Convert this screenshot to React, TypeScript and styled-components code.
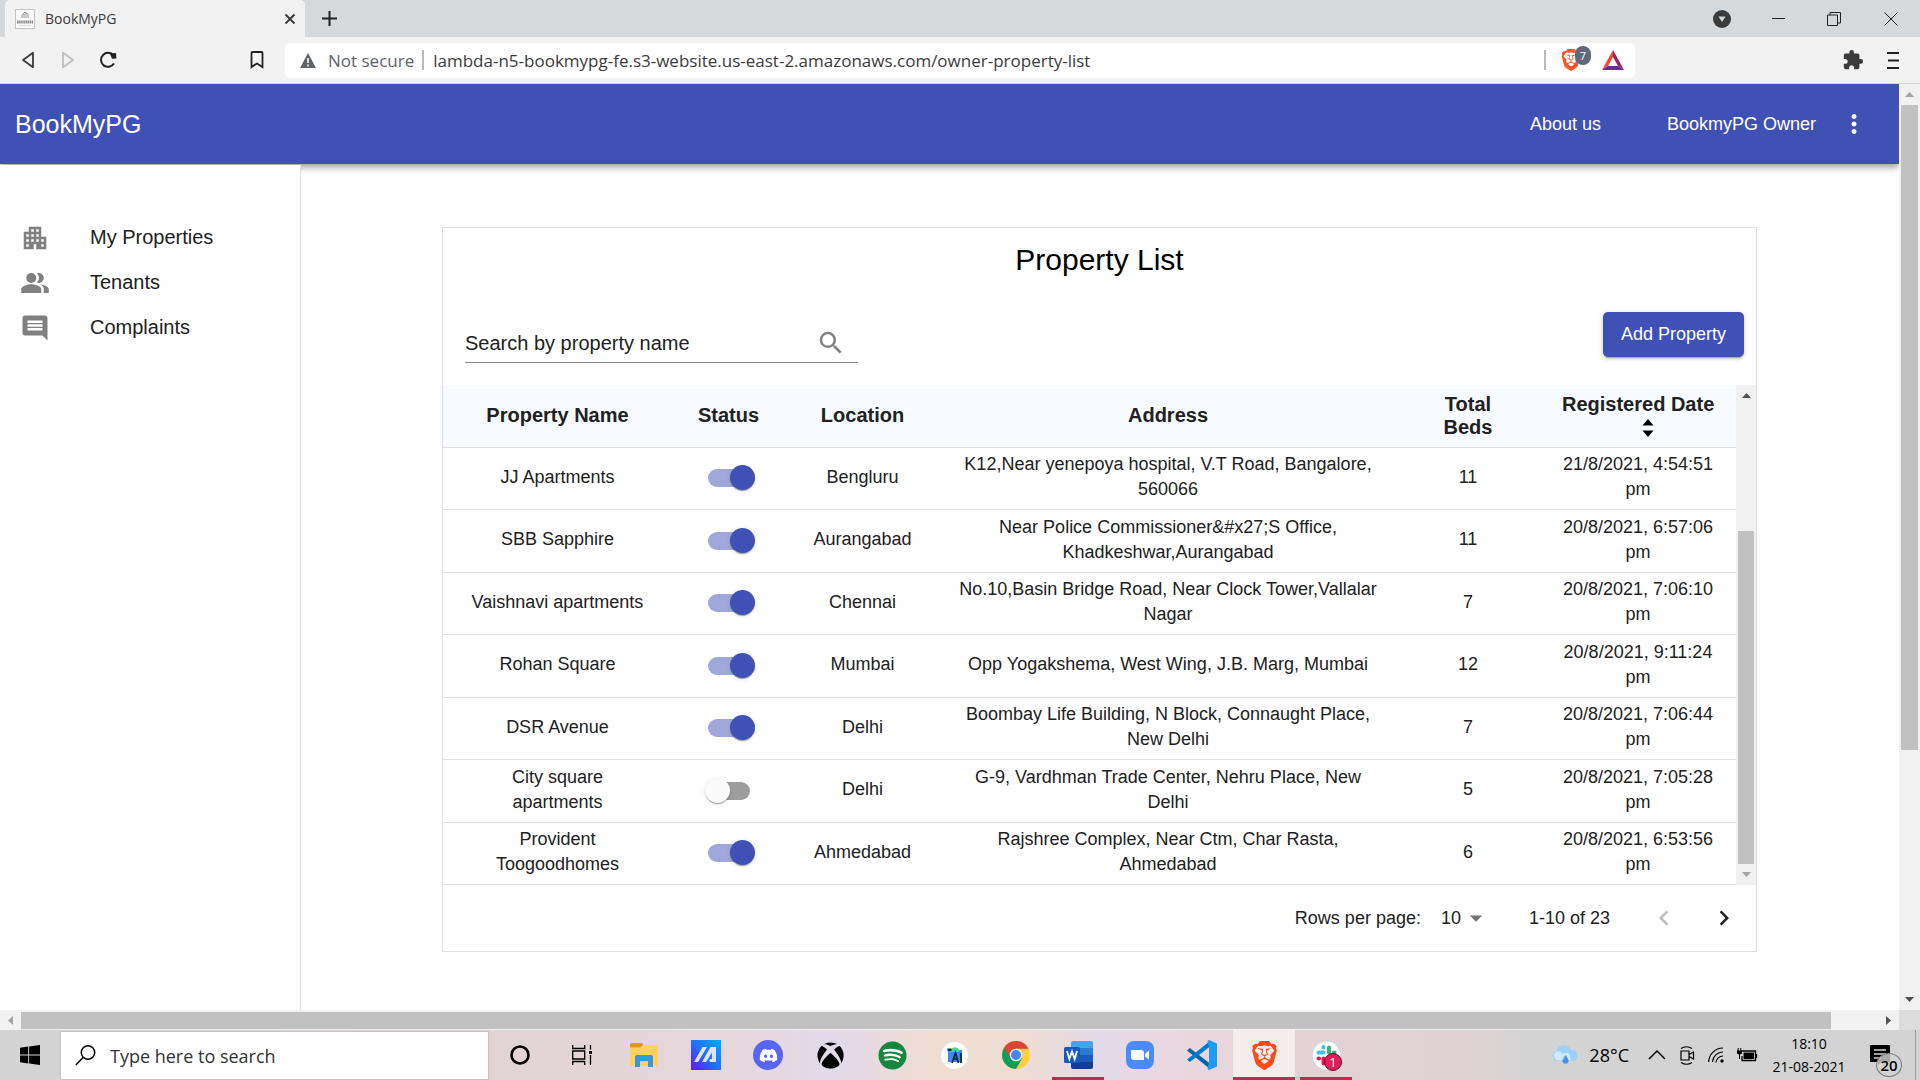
import React, { useState } from 'react';
import styled, { createGlobalStyle, css } from 'styled-components';
import {
  MdApartment,
  MdPeopleAlt,
  MdComment,
  MdSearch,
  MdMoreVert,
  MdChevronLeft,
  MdChevronRight,
  MdArrowDropDown,
  MdExtension,
} from 'react-icons/md';
import { FaDiscord, FaSpotify, FaXbox } from 'react-icons/fa';
import { SiBrave } from 'react-icons/si';

const primary = '#3f51b5';
const line = '#e0e0e0';
const appFont = '"Liberation Sans", Arial, sans-serif';
const systemFont = '"Open Sans", "Noto Sans", sans-serif';

const GlobalStyle = createGlobalStyle`
  *, *::before, *::after { box-sizing: border-box; }
  body { margin: 0; overflow: hidden; background: #fff; font-family: ${appFont}; color: #212121; }
  button, input, select { font: inherit; color: inherit; }
  button { border: 0; padding: 0; background: none; cursor: pointer; }
  svg { display: block; flex: none; }
  a { color: inherit; text-decoration: none; }
`;

const Desktop = styled.div`
  display: flex;
  flex-direction: column;
  height: 100vh;
`;

/* ---------- browser frame ---------- */

const TabStrip = styled.div`
  display: flex;
  align-items: stretch;
  height: 37px;
  padding-left: 5px;
  background: #d5d9dc;
  font-family: ${systemFont};
`;

const Tab = styled.div`
  display: flex;
  align-items: center;
  width: 300px;
  padding: 0 5px 0 10px;
  gap: 10px;
  border-radius: 5px 5px 0 0;
  background: #f2f2f2;
  font-size: 14px;
  color: #3b3b3b;
`;

const TabTitle = styled.span`
  flex: 1;
`;

const IconButton = styled.button<{ $w?: number; $h?: number }>`
  display: flex;
  align-items: center;
  justify-content: center;
  width: ${(p) => p.$w ?? 20}px;
  height: ${(p) => p.$h ?? 37}px;
  &:disabled { cursor: default; }
`;

const WindowControls = styled.div`
  display: flex;
  margin-left: auto;
`;

const Toolbar = styled.div`
  display: flex;
  align-items: center;
  height: 47px;
  padding: 0 14px 0 8px;
  border-bottom: 1px solid #d3d5d7;
  background: #f2f2f2;
  font-family: ${systemFont};
`;

const NavButtons = styled.div`
  display: flex;
  width: 277px;
  padding-right: 14px;
  & > :last-child { margin-left: auto; }
`;

const AddressBar = styled.div`
  display: flex;
  align-items: center;
  flex: 1;
  height: 35px;
  padding: 0 10px 0 15px;
  border-radius: 5px;
  background: #fff;
  font-size: 17px;
`;

const Security = styled.span`
  display: flex;
  align-items: center;
  gap: 12px;
  padding-right: 8px;
  color: #5f6368;
`;

const Divider = styled.span`
  width: 2px;
  height: 20px;
  background: #b8babd;
`;

const UrlInput = styled.input`
  flex: 1;
  min-width: 0;
  padding: 0 0 0 9px;
  border: 0;
  outline: 0;
  background: none;
  color: #3b3b3b;
`;

const ShieldButton = styled.button`
  position: relative;
  margin: 0 19px 0 14px;
`;

const ShieldCount = styled.span`
  position: absolute;
  top: -3px;
  left: 15px;
  width: 16px;
  height: 19px;
  border-radius: 8px;
  background: #62667a;
  color: #fff;
  font-size: 11px;
  line-height: 19px;
`;

const ToolbarEnd = styled.div`
  display: flex;
  align-items: center;
  justify-content: flex-end;
  width: 271px;
  gap: 14px;
`;

/* ---------- scroll bars ---------- */

const Track = styled.div<{ $row?: boolean; $slim?: boolean }>`
  display: flex;
  flex: none;
  flex-direction: ${(p) => (p.$row ? 'row' : 'column')};
  align-items: center;
  background: #f1f1f1;
  ${(p) => (p.$row ? 'height: 20px;' : `width: ${p.$slim ? 20 : 21}px;`)}
`;

const TrackEnd = styled.span`
  display: flex;
  flex: none;
  align-items: center;
  justify-content: center;
  width: 21px;
  height: 21px;
`;

const Rail = styled.div<{ $row?: boolean }>`
  display: flex;
  flex: 1;
  flex-direction: ${(p) => (p.$row ? 'row' : 'column')};
  align-self: stretch;
  padding: ${(p) => (p.$row ? '2px 0 1px' : '0 2px')};
`;

const Thumb = styled.div<{ $size: number }>`
  background: #c1c1c1;
  flex: ${(p) => p.$size} 0 0;
`;

const Space = styled.div<{ $size: number }>`
  flex: ${(p) => p.$size} 0 0;
`;

const Arrow = ({ turn, color }: { turn: number; color: string }) => (
  <svg width="11" height="11" viewBox="0 0 11 11">
    <path d="M5.500 3 L10 8 H1z" fill={color} transform={`rotate(${turn} 5.5 5.500)`} />
  </svg>
);

const Scrollbar = ({
  row, slim, before, size, after, start = '#505050', end = '#505050',
}: { row?: boolean; slim?: boolean; before: number; size: number; after: number; start?: string; end?: string }) => (
  <Track $row={row} $slim={slim} aria-hidden="true">
    <TrackEnd><Arrow turn={row ? -90 : 0} color={start} /></TrackEnd>
    <Rail $row={row}>
      <Space $size={before} />
      <Thumb $size={size} />
      <Space $size={after} />
    </Rail>
    <TrackEnd><Arrow turn={row ? 90 : 180} color={end} /></TrackEnd>
  </Track>
);

const Viewport = styled.div`
  display: flex;
  flex: 1;
  min-height: 0;
`;

const BottomScroll = styled.div`
  display: grid;
  grid-template-columns: 1fr 21px;
  background: #dcdcdc;
`;

/* ---------- application ---------- */

const Page = styled.div`
  display: flex;
  flex: 1;
  flex-direction: column;
  min-width: 0;
  overflow: hidden;
`;

const AppBar = styled.header`
  position: relative;
  z-index: 1;
  display: flex;
  flex: none;
  align-items: center;
  height: 80px;
  padding: 0 17px 0 15px;
  background: ${primary};
  color: #fff;
  font-size: 18px;
  box-shadow: 0 3px 5px -1px rgba(0, 0, 0, 0.2), 0 5px 6px rgba(0, 0, 0, 0.14), 0 1px 12px rgba(0, 0, 0, 0.12);
`;

const Brand = styled.a`
  flex: 1;
  font-size: 25px;
`;

const AppLink = styled.a`
  margin-right: 66px;
`;

const OwnerLink = styled.a`
  margin-right: 10px;
`;

const Body = styled.div`
  display: flex;
  flex: 1;
  min-height: 0;
`;

const Sidebar = styled.nav`
  position: relative;
  z-index: 2;
  flex: none;
  width: 301px;
  margin-top: 1px;
  padding-top: 50px;
  border-right: 1px solid ${line};
  background: #fff;
`;

const SideLink = styled.a`
  display: flex;
  align-items: center;
  height: 45px;
  padding-left: 20px;
  gap: 40px;
  font-size: 20px;
  svg { color: #808080; }
`;

const Content = styled.main`
  flex: 1;
  min-width: 0;
  padding: 63px 142px 0 141px;
`;

const Card = styled.section`
  border: 1px solid ${line};
  background: #fff;
`;

const Title = styled.h1`
  margin: 0;
  padding: 14px 0 0;
  color: #000;
  font-size: 30px;
  font-weight: 400;
  line-height: 36px;
  text-align: center;
`;

const Actions = styled.div`
  display: flex;
  align-items: flex-start;
  justify-content: space-between;
  padding: 34px 12px 22px 22px;
`;

const SearchField = styled.label`
  display: flex;
  align-items: center;
  width: 393px;
  margin-top: 12px;
  padding-right: 12px;
  border-bottom: 1px solid #8a8a8a;
  font-size: 20px;
  svg { color: #808080; }
`;

const SearchInput = styled.input`
  flex: 1;
  min-width: 0;
  height: 38px;
  padding: 0;
  border: 0;
  outline: 0;
  background: none;
  &::placeholder { color: #212121; opacity: 1; }
`;

const AddButton = styled.button`
  height: 45px;
  padding: 0 18px;
  border-radius: 5px;
  background: ${primary};
  color: #fff;
  font-size: 18px;
  box-shadow: 0 3px 1px -2px rgba(0, 0, 0, 0.2), 0 2px 3px rgba(0, 0, 0, 0.14), 0 1px 6px rgba(0, 0, 0, 0.12);
`;

const TableArea = styled.div`
  display: flex;
`;

const Table = styled.table`
  flex: 1;
  width: 100%;
  height: 500px;
  table-layout: fixed;
  border-collapse: collapse;
  text-align: center;
  font-size: 18px;
  line-height: 25px;
`;

const Col = styled.col<{ $w: number }>`
  width: ${(p) => p.$w}px;
`;

const HeadCell = styled.th`
  height: 62px;
  padding: 5px 22px;
  border-bottom: 1px solid ${line};
  background: #f7faff;
  font-size: 20px;
  font-weight: 700;
  line-height: 23px;
`;

const SortHead = styled.button`
  display: inline-flex;
  flex-direction: column;
  align-items: center;
  font-weight: 700;
  white-space: nowrap;
  svg { margin-left: 20px; }
`;

const Cell = styled.td<{ $control?: boolean }>`
  padding: ${(p) => (p.$control ? '5px 12px' : '4px 12px 6px')};
  border-bottom: 1px solid ${line};
`;

const CellText = styled.span<{ $max: number }>`
  display: inline-block;
  max-width: ${(p) => p.$max}px;
  vertical-align: top;
`;

const Switch = styled.input`
  position: relative;
  display: block;
  width: 42px;
  height: 18px;
  margin: 0 auto;
  appearance: none;
  border-radius: 9px;
  background: #9e9e9e;
  cursor: pointer;
  &::after {
    content: '';
    position: absolute;
    top: -4px;
    left: -3px;
    width: 25px;
    height: 25px;
    border-radius: 50%;
    background: #fafafa;
    box-shadow: 0 2px 1px -1px rgba(0, 0, 0, 0.2), 0 1px 1px rgba(0, 0, 0, 0.14), 0 1px 4px rgba(0, 0, 0, 0.12);
  }
  &:checked { background: #9fa8da; }
  &:checked::after { left: 22px; background: ${primary}; }
`;

const Pagination = styled.div`
  display: flex;
  align-items: center;
  justify-content: flex-end;
  height: 66px;
  padding-right: 2px;
  font-size: 18px;
`;

const PageSize = styled.label`
  display: flex;
  align-items: center;
`;

const SelectWrap = styled.span`
  display: flex;
  align-items: center;
  margin: 0 38px 0 20px;
  svg { margin-left: -30px; color: #757575; pointer-events: none; }
`;

const Select = styled.select`
  width: 50px;
  padding: 0;
  border: 0;
  outline: 0;
  appearance: none;
  background: none;
`;

const Pager = styled.div`
  display: flex;
  margin-left: 24px;
  button:disabled { color: #bdbdbd; }
`;

/* ---------- task bar ---------- */

const Taskbar = styled.footer`
  display: flex;
  flex: none;
  height: 50px;
  background: linear-gradient(90deg, #d3d3d3 0, #d3d3d3 61px, #e2d3d5 490px, #e6d7dd 740px, #e2daea 835px, #eeddd3 930px, #eeddd3 1020px, #e2dae8 1100px, #ead8e0 1170px, #e2d2d4 1300px, #e0d2d4 1460px, #d3d3d3 1530px);
  font-family: ${systemFont};
  color: #000;
`;

const StartButton = styled.button`
  display: flex;
  align-items: center;
  justify-content: center;
  width: 60px;
`;

const TaskSearch = styled.label`
  display: flex;
  align-items: center;
  width: 429px;
  margin-top: 1px;
  padding-left: 14px;
  gap: 14px;
  border: 1px solid #c4c4c4;
  background: #fff;
  input {
    flex: 1;
    min-width: 0;
    padding: 0;
    border: 0;
    outline: 0;
    background: none;
    font-size: 18px;
  }
  input::placeholder { color: #333; opacity: 1; }
`;

const TaskButton = styled.button<{ $open?: boolean; $active?: boolean }>`
  position: relative;
  display: flex;
  align-items: center;
  justify-content: center;
  width: 62px;
  ${(p) => p.$active && css`background: #f3eded;`}
  ${(p) => (p.$open || p.$active) && css`
    &::after {
      content: '';
      position: absolute;
      right: ${p.$active ? 0 : 5}px;
      bottom: 0;
      left: ${p.$active ? 0 : 5}px;
      height: 3px;
      background: #c9264f;
    }
  `}
`;

const Badge = styled.span`
  position: absolute;
  top: 23px;
  left: 29px;
  width: 18px;
  height: 18px;
  border: 1px solid #5c1027;
  border-radius: 50%;
  background: #e01e5a;
  color: #fff;
  font-size: 13px;
  line-height: 16px;
`;

const Tray = styled.div`
  display: flex;
  align-items: center;
  margin-left: auto;
  padding-right: 4px;
`;

const Weather = styled.button`
  display: flex;
  align-items: center;
  gap: 11px;
  margin-right: 19px;
  font-size: 18px;
`;

const TrayIcons = styled.div`
  display: flex;
  align-items: center;
  gap: 13px;
`;

const Clock = styled.button`
  width: 102px;
  font-size: 14px;
  line-height: 23px;
  white-space: nowrap;
`;

const Notifications = styled.button`
  position: relative;
  width: 56px;
  height: 50px;
  padding-left: 10px;
  border-right: 1px solid #9c9c9c;
`;

const NoticeCount = styled.span`
  position: absolute;
  top: 23px;
  left: 16px;
  width: 26px;
  height: 24px;
  border: 1px solid #777;
  border-radius: 50%;
  background: rgba(211, 211, 211, 0.8);
  font-size: 15px;
  font-weight: 600;
  line-height: 22px;
`;

/* ---------- drawings ---------- */

const stroke = { fill: 'none', stroke: 'currentColor' };

const Favicon = () => (
  <svg width="20" height="20" viewBox="0 0 20 20">
    <rect x=".5" y=".5" width="19" height="19" fill="#fafafa" stroke="#c4c4c4" />
    <path d="M7 9V6l3-3 3 2v4M9 9V5M11 9V4" stroke="#999" fill="none" />
    <path d="M2 13h16" stroke="#888" strokeWidth="3" strokeDasharray="1.500 .6" />
    <path d="M4 16.500h12" stroke="#ddd" />
  </svg>
);

const Triangle = ({ flip, color }: { flip?: boolean; color: string }) => (
  <svg width="14" height="18" viewBox="0 0 14 18">
    <path d="M12 1.800V16.200L2 9z" fill="none" stroke={color} strokeWidth="1.800" strokeLinejoin="round" transform={flip ? 'matrix(-1 0 0 1 14 0)' : undefined} />
  </svg>
);

const Reload = () => (
  <svg width="18" height="18" viewBox="0 0 18 18">
    <path d="M15 12.500A7 7 0 1 1 14.500 4.500" {...stroke} strokeWidth="2" />
    <path d="M11 2.500l6-.5.4 5.500-4.400.2z" fill="currentColor" />
  </svg>
);

const Windows = () => (
  <svg width="20" height="20" viewBox="0 0 20 20">
    <path d="M0 2.800L8.200 1.600V9.600H0zM9.100 1.500L20 0V9.600H9.100zM0 10.400H8.200V18.400L0 17.200zM9.100 10.400H20V20L9.100 18.500z" />
  </svg>
);

const Magnifier = () => (
  <svg width="21" height="21" viewBox="0 0 21 21">
    <circle cx="13" cy="7.500" r="6.700" {...stroke} strokeWidth="1.500" />
    <path d="M8.300 12.300L.8 20" {...stroke} strokeWidth="1.500" />
  </svg>
);

const TaskView = () => (
  <svg width="20" height="20" viewBox="0 0 20 20">
    <path d="M.7 0v3.500h12V0M.7 20v-3.500h12V20M.7 6h12v8H.7zM18.500 0v4.500M18.500 10v10" {...stroke} strokeWidth="1.300" />
    <path d="M17 6h3v3h-3z" />
  </svg>
);

const Explorer = () => (
  <svg width="28" height="24" viewBox="0 0 28 24">
    <path d="M0 1.500Q0 0 1.500 0H12l1.500 2-2 3H0z" fill="#dd9c0a" />
    <path d="M0 4.500h10.500l2.500-2.500H26.500q1.500 0 1.500 1.500v19H0z" fill="#ffd35c" />
    <path d="M5 24V14q0-2 2-2h14q2 0 2 2v10h-5v-6h-8v6z" fill="#3d95dc" />
  </svg>
);

const Armoury = () => (
  <svg width="30" height="30" viewBox="0 0 30 30">
    <defs>
      <linearGradient id="arm" x1="0" y1="1" x2="1" y2="0">
        <stop offset="0" stopColor="#6414ff" />
        <stop offset=".5" stopColor="#2470ff" />
        <stop offset="1" stopColor="#00aaff" />
      </linearGradient>
    </defs>
    <path d="M0 0h30v30H0z" fill="url(#arm)" />
    <path d="M3 22L11.500 7H16L7 22zM11 22L19.500 7H25v15h-4V12.500L15 22z" fill="#dfe5ff" />
    <circle cx="20" cy="20.500" r="1.500" fill="#fff" />
  </svg>
);

const Disc = styled.span<{ $bg: string; $size: number }>`
  display: flex;
  align-items: center;
  justify-content: center;
  width: ${(p) => p.$size}px;
  height: ${(p) => p.$size}px;
  border-radius: 50%;
  background: ${(p) => p.$bg};
`;

const AndroidStudio = () => (
  <svg width="27" height="27" viewBox="0 0 27 27">
    <circle cx="13.500" cy="13.500" r="13.500" fill="#fff" />
    <path d="M7 8h14v12H7z" fill="#4285f4" />
    <path d="M9 8.500q5-6.500 10 0l-1 1.500H9z" fill="#3ddc84" />
    <path d="M6.500 6.500h4V9h-4z" fill="#073042" />
    <path d="M11 21l3.500-10 3 10M12.500 17h4M20 11v10" fill="none" stroke="#073042" strokeWidth="1.800" />
  </svg>
);

const Chrome = () => (
  <svg width="28" height="28" viewBox="0 0 28 28">
    <circle cx="14" cy="14" r="14" fill="#ffcd40" />
    <path d="M14 14L1.900 7A14 14 0 0 0 14 28l6-10.500z" fill="#0f9d58" />
    <path d="M14 7.700H26.500A14 14 0 0 0 1.900 7L8.500 17z" fill="#db4437" />
    <circle cx="14" cy="14" r="6.300" fill="#f1f1f1" />
    <circle cx="14" cy="14" r="5" fill="#4285f4" />
  </svg>
);

const Word = () => (
  <svg width="29" height="28" viewBox="0 0 29 28">
    <path d="M7 2q0-2 2-2h18q2 0 2 2v5H7z" fill="#41a5ee" />
    <path d="M7 7h22v7H7z" fill="#2b7cd3" />
    <path d="M7 14h22v7H7z" fill="#185abd" />
    <path d="M7 21h22v5q0 2-2 2H9q-2 0-2-2z" fill="#103f91" />
    <rect y="6" width="16" height="16" rx="1.500" fill="#185abd" />
    <path d="M3 10l2.300 8L8 10.500 10.700 18 13 10" fill="none" stroke="#fff" strokeWidth="1.800" />
  </svg>
);

const Zoom = () => (
  <svg width="28" height="28" viewBox="0 0 28 28">
    <rect width="28" height="28" rx="8" fill="#4a8cff" />
    <path d="M5 9h10q3 0 3 3v7H8q-3 0-3-3zM19 13l4-3.500v9L19 15.500z" fill="#fff" />
  </svg>
);

const Code = () => (
  <svg width="30" height="30" viewBox="0 0 30 30">
    <path d="M0 10.500L2.800 8 23 23.500V29z" fill="#0065a9" />
    <path d="M0 19.500L2.800 22 23 6.500V1z" fill="#007acc" />
    <path d="M22 0l8 3.500v23L22 30l-1.500-1L22 22V8l-1.500-7z" fill="#1f9cf0" />
  </svg>
);

const Slack = () => (
  <svg width="29" height="29" viewBox="0 0 29 29">
    <circle cx="14.500" cy="14.500" r="14.200" fill="#fff" stroke="#ccc" strokeWidth=".5" />
    <g fill="none" strokeWidth="4" strokeLinecap="round">
      <path d="M6.500 11.500h5M11.500 6v.5" stroke="#36c5f0" />
      <path d="M17 6.500v5M22 11.500h.5" stroke="#2eb67d" />
      <path d="M11.500 17.500v5M6.500 17.500h.5" stroke="#e01e5a" />
      <path d="M17 17.500h5M17 22.500h.3" stroke="#ecb22e" />
    </g>
  </svg>
);

const CloudRain = () => (
  <svg width="26" height="20" viewBox="0 0 26 20">
    <path d="M5 15.500a4.800 4.800 0 0 1-.3-9.500Q6 .5 11.500.3T19 5q6-.5 6.800 5t-4.800 5.500z" fill="#9fd0f7" />
    <path d="M5 15a4.500 4.500 0 0 1 0-8.500q4-.8 5.500 2.500 4-2.500 7 0l1 6z" fill="#cdeafd" />
    <path d="M13.500 10q3.500 4.500 3 6.500a3.100 3.100 0 0 1-6 0q0-2 3-6.500z" fill="#3f96ee" />
  </svg>
);

const MeetNow = () => (
  <svg width="16" height="19" viewBox="0 0 16 19">
    <path d="M2 2.500Q7.500-1 13 2.500M2 16.500Q7.500 20 13 16.500M2 5h8v9H2zM10 8.500L14.500 6v7L10 10.500" {...stroke} strokeWidth="1.200" />
  </svg>
);

const Wifi = () => (
  <svg width="16" height="16" viewBox="0 0 16 16">
    <path d="M.6 15A14.500 14.500 0 0 1 15 1M4.500 15A10.500 10.500 0 0 1 15 5M8 15.500A7 7 0 0 1 15 9" {...stroke} strokeWidth="1.200" />
    <circle cx="14" cy="14" r="1.700" />
  </svg>
);

const Battery = () => (
  <svg width="21" height="14" viewBox="0 0 21 14">
    <path d="M4 3h14.500v9.500H5V8M19.500 6v4" {...stroke} strokeWidth="1.300" />
    <path d="M6.500 4.500H17V11H6.500zM0 2.500h5v3L2.500 7 0 5.500z" />
    <path d="M1.200 0v3M3.800 0v3M2.500 6v5" {...stroke} />
  </svg>
);

const Notes = () => (
  <svg width="20" height="20" viewBox="0 0 20 20">
    <path d="M0 0h20v17H11l-3 3v-3H0z" />
    <path d="M4 5h12M4 9h12M4 13h7" stroke="#d3d3d3" strokeWidth="1.300" />
  </svg>
);

/* ---------- data ---------- */

type Property = { name: string; on: boolean; city: string; address: string; beds: number; date: string };

const initial: Property[] = [
  { name: 'JJ Apartments', on: true, city: 'Bengluru', address: 'K12,Near yenepoya hospital, V.T Road, Bangalore, 560066', beds: 11, date: '21/8/2021, 4:54:51 pm' },
  { name: 'SBB Sapphire', on: true, city: 'Aurangabad', address: 'Near Police Commissioner&#x27;S Office, Khadkeshwar,Aurangabad', beds: 11, date: '20/8/2021, 6:57:06 pm' },
  { name: 'Vaishnavi apartments', on: true, city: 'Chennai', address: 'No.10,Basin Bridge Road, Near Clock Tower,Vallalar Nagar', beds: 7, date: '20/8/2021, 7:06:10 pm' },
  { name: 'Rohan Square', on: true, city: 'Mumbai', address: 'Opp Yogakshema, West Wing, J.B. Marg, Mumbai', beds: 12, date: '20/8/2021, 9:11:24 pm' },
  { name: 'DSR Avenue', on: true, city: 'Delhi', address: 'Boombay Life Building, N Block, Connaught Place, New Delhi', beds: 7, date: '20/8/2021, 7:06:44 pm' },
  { name: 'City square apartments', on: false, city: 'Delhi', address: 'G-9, Vardhman Trade Center, Nehru Place, New Delhi', beds: 5, date: '20/8/2021, 7:05:28 pm' },
  { name: 'Provident Toogoodhomes', on: true, city: 'Ahmedabad', address: 'Rajshree Complex, Near Ctm, Char Rasta, Ahmedabad', beds: 6, date: '20/8/2021, 6:53:56 pm' },
];

const PropertyTable = () => {
  const [rows, setRows] = useState(initial);
  const toggle = (i: number) =>
    setRows((all) => all.map((r, n) => (n === i ? { ...r, on: !r.on } : r)));
  return (
    <Table>
      <colgroup>
        {[229, 113, 155, 456, 144, 196].map((w) => <Col key={w} $w={w} />)}
      </colgroup>
      <thead>
        <tr>
          <HeadCell>Property Name</HeadCell>
          <HeadCell>Status</HeadCell>
          <HeadCell>Location</HeadCell>
          <HeadCell>Address</HeadCell>
          <HeadCell>Total Beds</HeadCell>
          <HeadCell>
            <SortHead>
              Registered Date
              <svg width="12" height="23" viewBox="0 0 12 23"><path d="M6 3l5.500 6.500H.5zM.5 14.500h11L6 21z" /></svg>
            </SortHead>
          </HeadCell>
        </tr>
      </thead>
      <tbody>
        {rows.map((r, i) => (
          <tr key={r.name}>
            <Cell><CellText $max={180}>{r.name}</CellText></Cell>
            <Cell $control>
              <Switch type="checkbox" role="switch" aria-label={`${r.name} status`} checked={r.on} onChange={() => toggle(i)} />
            </Cell>
            <Cell>{r.city}</Cell>
            <Cell><CellText $max={426}>{r.address}</CellText></Cell>
            <Cell>{r.beds}</Cell>
            <Cell><CellText $max={160}>{r.date}</CellText></Cell>
          </tr>
        ))}
      </tbody>
    </Table>
  );
};

export default function App() {
  return (
    <Desktop>
      <GlobalStyle />
      <TabStrip>
        <Tab>
          <Favicon />
          <TabTitle>BookMyPG</TabTitle>
          <IconButton aria-label="Close tab">
            <svg width="12" height="12" viewBox="0 0 12 12"><path d="M1.500 1.500l9 9M10.500 1.500l-9 9" {...stroke} strokeWidth="2" /></svg>
          </IconButton>
        </Tab>
        <IconButton $w={49} aria-label="New tab">
          <svg width="15" height="15" viewBox="0 0 15 15"><path d="M7.500 0v15M0 7.500h15" {...stroke} strokeWidth="2" /></svg>
        </IconButton>
        <WindowControls>
          <IconButton $w={56} aria-label="Search tabs">
            <svg width="18" height="18" viewBox="0 0 18 18"><circle cx="9" cy="9" r="9" fill="#3b3b3b" /><path d="M5.500 6.500h7L9 12z" fill="#d5d9dc" /></svg>
          </IconButton>
          <IconButton $w={56} aria-label="Minimize">
            <svg width="13" height="13" viewBox="0 0 13 13"><path d="M0 6.500h13" {...stroke} /></svg>
          </IconButton>
          <IconButton $w={56} aria-label="Restore">
            <svg width="14" height="14" viewBox="0 0 14 14"><path d="M.5 3h10v10.500H.5zM3 3V.5h10.500V11h-3" {...stroke} /></svg>
          </IconButton>
          <IconButton $w={58} aria-label="Close">
            <svg width="14" height="14" viewBox="0 0 14 14"><path d="M.5.5l13 13M13.500.5l-13 13" {...stroke} /></svg>
          </IconButton>
        </WindowControls>
      </TabStrip>
      <Toolbar>
        <NavButtons>
          <IconButton $w={40} aria-label="Back"><Triangle color="#3b3b3b" /></IconButton>
          <IconButton $w={40} aria-label="Forward" disabled><Triangle flip color="#bdbdbd" /></IconButton>
          <IconButton $w={40} aria-label="Reload"><Reload /></IconButton>
          <IconButton $w={28} aria-label="Bookmark">
            <svg width="14" height="18" viewBox="0 0 14 18"><path d="M1.500 2q0-1 1-1h9q1 0 1 1v14L7 12.500 1.500 16z" {...stroke} strokeWidth="1.800" /></svg>
          </IconButton>
        </NavButtons>
        <AddressBar>
          <Security>
            <svg width="16" height="15" viewBox="0 0 16 15"><path d="M8 0l8 15H0z" fill="#5f6368" /><path d="M8 5v5M8 11.500v2" stroke="#fff" strokeWidth="1.600" /></svg>
            Not secure
          </Security>
          <Divider />
          <UrlInput aria-label="Address" defaultValue="lambda-n5-bookmypg-fe.s3-website.us-east-2.amazonaws.com/owner-property-list" />
          <Divider />
          <ShieldButton aria-label="Shields">
            <SiBrave size={22} color="#fb542b" />
            <ShieldCount>7</ShieldCount>
          </ShieldButton>
          <IconButton $w={24} $h={24} aria-label="Rewards">
            <svg width="22" height="20" viewBox="0 0 22 20">
              <path d="M11 0L0 20l6-4 5-9z" fill="#ff4724" />
              <path d="M11 0l11 20-6-4-5-9z" fill="#9e1f63" />
              <path d="M0 20h22l-6-4H6z" fill="#662d91" />
            </svg>
          </IconButton>
        </AddressBar>
        <ToolbarEnd>
          <IconButton $w={26} aria-label="Extensions"><MdExtension size={22} color="#3b3b3b" /></IconButton>
          <IconButton $w={26} aria-label="Menu">
            <svg width="12" height="17" viewBox="0 0 12 17"><path d="M0 1h12M1 8.500H12M0 16h12" {...stroke} strokeWidth="1.800" /></svg>
          </IconButton>
        </ToolbarEnd>
      </Toolbar>

      <Viewport>
        <Page>
          <AppBar>
            <Brand href="#">BookMyPG</Brand>
            <AppLink href="#">About us</AppLink>
            <OwnerLink href="#">BookmyPG Owner</OwnerLink>
            <IconButton $w={56} $h={56} aria-label="Account menu"><MdMoreVert size={30} /></IconButton>
          </AppBar>
          <Body>
            <Sidebar>
              <SideLink href="#"><MdApartment size={30} />My Properties</SideLink>
              <SideLink href="#"><MdPeopleAlt size={30} />Tenants</SideLink>
              <SideLink href="#"><MdComment size={30} />Complaints</SideLink>
            </Sidebar>
            <Content>
              <Card>
                <Title>Property List</Title>
                <Actions>
                  <SearchField>
                    <SearchInput type="text" aria-label="Search by property name" placeholder="Search by property name" />
                    <MdSearch size={30} />
                  </SearchField>
                  <AddButton>Add Property</AddButton>
                </Actions>
                <TableArea>
                  <PropertyTable />
                  <Scrollbar slim before={125} size={333} after={0} end="#a3a3a3" />
                </TableArea>
                <Pagination>
                  <PageSize>
                    Rows per page:
                    <SelectWrap>
                      <Select defaultValue="10">
                        <option>10</option>
                        <option>25</option>
                      </Select>
                      <MdArrowDropDown size={30} />
                    </SelectWrap>
                  </PageSize>
                  1-10 of 23
                  <Pager>
                    <IconButton $w={60} $h={60} aria-label="Previous page" disabled><MdChevronLeft size={30} /></IconButton>
                    <IconButton $w={60} $h={60} aria-label="Next page"><MdChevronRight size={30} /></IconButton>
                  </Pager>
                </Pagination>
              </Card>
            </Content>
          </Body>
        </Page>
        <Scrollbar before={0} size={645} after={239} start="#a3a3a3" />
      </Viewport>
      <BottomScroll>
        <Scrollbar row before={0} size={1810} after={47} start="#a3a3a3" />
      </BottomScroll>

      <Taskbar>
        <StartButton aria-label="Start"><Windows /></StartButton>
        <TaskSearch>
          <Magnifier />
          <input type="text" aria-label="Type here to search" placeholder="Type here to search" />
        </TaskSearch>
        <TaskButton aria-label="Cortana">
          <svg width="20" height="20" viewBox="0 0 20 20"><circle cx="10" cy="10" r="8.500" {...stroke} strokeWidth="2.600" /></svg>
        </TaskButton>
        <TaskButton aria-label="Task view"><TaskView /></TaskButton>
        <TaskButton aria-label="File Explorer"><Explorer /></TaskButton>
        <TaskButton aria-label="Armoury"><Armoury /></TaskButton>
        <TaskButton aria-label="Discord"><Disc $bg="#5865f2" $size={30}><FaDiscord size={19} color="#fff" /></Disc></TaskButton>
        <TaskButton aria-label="Xbox"><FaXbox size={27} /></TaskButton>
        <TaskButton aria-label="Spotify"><Disc $bg="#fff" $size={27}><FaSpotify size={29} color="#15883e" /></Disc></TaskButton>
        <TaskButton aria-label="Android Studio"><AndroidStudio /></TaskButton>
        <TaskButton aria-label="Chrome"><Chrome /></TaskButton>
        <TaskButton $open aria-label="Word"><Word /></TaskButton>
        <TaskButton aria-label="Zoom"><Zoom /></TaskButton>
        <TaskButton aria-label="Visual Studio Code"><Code /></TaskButton>
        <TaskButton $active aria-label="Brave"><SiBrave size={29} color="#ff4a14" /></TaskButton>
        <TaskButton $open aria-label="Slack"><Slack /><Badge>1</Badge></TaskButton>
        <Tray>
          <Weather><CloudRain />28°C</Weather>
          <TrayIcons>
            <svg width="18" height="10" viewBox="0 0 18 10"><path d="M1 9l8-8 8 8" {...stroke} strokeWidth="1.500" /></svg>
            <MeetNow />
            <Wifi />
            <Battery />
          </TrayIcons>
          <Clock>18:10<br />21-08-2021</Clock>
          <Notifications aria-label="Notifications"><Notes /><NoticeCount>20</NoticeCount></Notifications>
        </Tray>
      </Taskbar>
    </Desktop>
  );
}
